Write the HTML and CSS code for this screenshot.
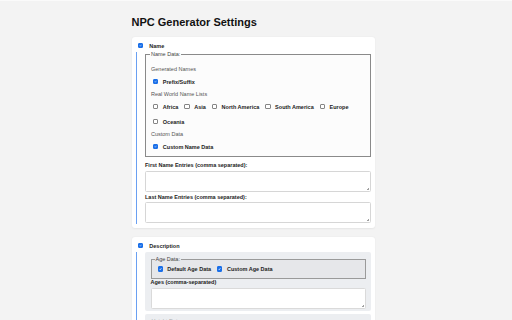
FILE: index.html
```html
<!DOCTYPE html>
<html>
<head>
    <title>NPC Generator Settings</title>
    <link rel="stylesheet" href="styles.css">
</head>
<body>
    <div class="page">
        <h1>NPC Generator Settings</h1>

        <div class="card">
            <label class="card-header"><input type="checkbox" checked>Name</label>
            <div class="card-body">
                <fieldset class="data-set">
                    <legend>Name Data:</legend>
                    <div class="group-title">Generated Names</div>
                    <div class="options">
                        <label class="option"><input type="checkbox" checked>Prefix/Suffix</label>
                    </div>
                    <div class="group-title">Real World Name Lists</div>
                    <div class="options">
                        <label class="option"><input type="checkbox">Africa</label>
                        <label class="option"><input type="checkbox">Asia</label>
                        <label class="option"><input type="checkbox">North America</label>
                        <label class="option"><input type="checkbox">South America</label>
                        <label class="option"><input type="checkbox">Europe</label>
                        <label class="option"><input type="checkbox">Oceania</label>
                    </div>
                    <div class="group-title">Custom Data</div>
                    <div class="options">
                        <label class="option"><input type="checkbox" checked>Custom Name Data</label>
                    </div>
                </fieldset>
                <label class="field-label">First Name Entries (comma separated):</label>
                <textarea></textarea>
                <label class="field-label">Last Name Entries (comma separated):</label>
                <textarea></textarea>
            </div>
        </div>

        <div class="card">
            <label class="card-header"><input type="checkbox" checked>Description</label>
            <div class="card-body">
                <div class="sub-box">
                    <fieldset class="data-set inline-set">
                        <legend>Age Data:</legend>
                        <div class="options">
                            <label class="option"><input type="checkbox" checked>Default Age Data</label>
                            <label class="option"><input type="checkbox" checked>Custom Age Data</label>
                        </div>
                    </fieldset>
                    <label class="field-label">Ages (comma-separated)</label>
                    <textarea></textarea>
                </div>
                <div class="sub-box">
                    <div class="sub-title">Height Data</div>
                </div>
            </div>
        </div>
    </div>
</body>
</html>
```

FILE: styles.css
```css
body {
    margin: 0;
    padding-right: 6px;
    border-top: 1px solid #fafafa;
    background-color: #f3f3f3;
    font-family: "Liberation Sans", Arial, sans-serif;
    font-size: 5.5px;
    color: #222;
}
.page {
    width: 243px;
    margin: 0 auto;
}
h1 {
    font-size: 11px;
    line-height: 13px;
    margin: 15px 0 8px;
    color: #111;
}
.card {
    background-color: #fff;
    border-radius: 3px;
    padding: 4px;
    margin-bottom: 9px;
    box-shadow: 0 0.5px 2px rgba(0, 0, 0, 0.06);
}
.card-header {
    display: flex;
    align-items: center;
    height: 9px;
    padding-left: 2px;
    font-weight: bold;
}
input[type="checkbox"] {
    appearance: none;
    flex: none;
    width: 5.3px;
    height: 5.3px;
    box-sizing: border-box;
    border: 0.6px solid #858585;
    border-radius: 1px;
    background: #fff;
}
input[type="checkbox"]:checked {
    border-color: #1a6fe8;
    background: #1a6fe8 url("data:image/svg+xml,%3Csvg xmlns='http://www.w3.org/2000/svg' viewBox='0 0 10 10'%3E%3Cpath d='M2 5.2 4.2 7.3 8.2 2.6' fill='none' stroke='white' stroke-width='1.6'/%3E%3C/svg%3E") center / 100% no-repeat;
}
.card-header input {
    margin: 0 6.5px 0 0;
}
.card-body {
    margin-top: 2px;
    border-left: 1.5px solid #6aa0f2;
    padding: 0 0 1px 8.5px;
}
.data-set {
    margin: 0 0 5px;
    min-width: 0;
    border: 1px solid #8a8a8a;
    padding: 4px 5px 5px;
    background: #fcfcfc;
}
legend {
    padding: 0 1px;
    margin-left: -1px;
    line-height: 5px;
    color: #444;
}
.group-title {
    margin-top: 5px;
    line-height: 6px;
    color: #555;
}
.options {
    display: flex;
    flex-wrap: wrap;
    gap: 6px 4px;
    margin-top: 5px;
}
.option {
    display: flex;
    align-items: center;
    height: 9px;
    font-weight: bold;
}
.option input {
    margin: 0 4.5px 0 2px;
}
.field-label {
    display: block;
    font-weight: bold;
    line-height: 6px;
    margin: 2px 0 2.5px;
}
textarea {
    display: block;
    width: 100%;
    height: 21px;
    box-sizing: border-box;
    margin: 0;
    border: 1px solid #d6d6d6;
    border-radius: 1.5px;
    resize: none;
    background: #fff linear-gradient(135deg, transparent 60%, #a0a0a0 60%, #a0a0a0 68%, transparent 68%, transparent 80%, #a0a0a0 80%, #a0a0a0 88%, transparent 88%) right 1px bottom 1px / 3px 3px no-repeat;
}
.sub-box {
    background: #eceef1;
    border-radius: 2px;
    padding: 4.5px 4.5px 2px 5.5px;
    margin-bottom: 3.5px;
}
.sub-title {
    line-height: 5px;
    color: #aaa;
    padding-left: 1px;
}
.inline-set {
    margin-bottom: 0.5px;
    padding: 3px 4px 4px;
    border-color: #9a9a9a;
    background: #e6e7ea;
}
.inline-set .options {
    margin-top: 0;
}
.sub-box .field-label {
    margin-top: 0;
}
.sub-box textarea {
    border-color: #dadada;
}
```
